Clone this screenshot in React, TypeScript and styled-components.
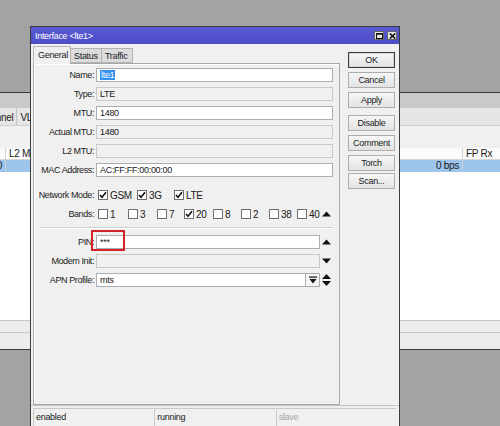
import styled, { createGlobalStyle } from "styled-components";

const GlobalStyle = createGlobalStyle`
  html, body {
    margin: 0;
    padding: 0;
    background: #a3a3a3;
  }
  body {
    font-family: "Liberation Sans Narrow", "Liberation Sans", Arial, sans-serif;
    font-size: 9px;
    letter-spacing: -0.3px;
    color: #1a1a1a;
    overflow: hidden;
  }
  * {
    box-sizing: border-box;
  }
`;

const Desktop = styled.div`
  position: relative;
  width: 500px;
  height: 426px;
  overflow: hidden;
  background: #a3a3a3;
`;

/* ---------- main window behind the dialog ---------- */

const MainWindow = styled.div`
  position: absolute;
  left: 0;
  top: 92px;
  width: 500px;
  height: 258px;
  display: flex;
  flex-direction: column;
  background: #f0f0f0;
  border-top: 1px solid #3a3a3a;
  border-bottom: 1px solid #3a3a3a;
`;

const MainToolbar = styled.div`
  height: 15px;
  background: #c9c9c9;
`;

const MainTabs = styled.div`
  height: 18px;
  display: flex;
  margin-left: -18px;
  background: #e6e6e6;
  border-bottom: 1px solid #cfcfcf;
`;

const MainTab = styled.div`
  padding: 4px 3px 0 3px;
  border-right: 1px solid #c4c4c4;
  line-height: 12px;
  font-size: 10px;
`;

const FilterArea = styled.div`
  height: 22px;
  background: #f0f0f0;
`;

const ListGrid = styled.div<{ $selected?: boolean; $header?: boolean }>`
  display: grid;
  grid-template-columns: 30px 80px 377px 1fr;
  margin-left: -25px;
  height: 12px;
  line-height: 12px;
  font-size: 10px;
  background: ${({ $selected, $header }) =>
    $selected ? "#9dc5ec" : $header ? "#fbfbfb" : "#fff"};
  border-bottom: 1px solid ${({ $header }) => ($header ? "#d6d6d6" : "transparent")};
`;

const ListCell = styled.div<{ $right?: boolean }>`
  padding: 0 3px;
  text-align: ${({ $right }) => ($right ? "right" : "left")};
  white-space: nowrap;
  overflow: hidden;
  border-left: 1px solid #d0d0d0;
`;

const ListBody = styled.div`
  flex: 1;
  background: #fff;
`;

const MainBar = styled.div<{ $h: number }>`
  height: ${({ $h }) => $h}px;
  background: #ececec;
  border-top: 1px solid #c6c6c6;
`;

/* ---------- interface dialog ---------- */

const Dialog = styled.div`
  position: absolute;
  left: 30px;
  top: 26px;
  width: 370px;
  height: 412px;
  background: #f0f0f0;
  border: 1px solid #3c3c3c;
  display: flex;
  flex-direction: column;
`;

const TitleBar = styled.div`
  height: 17px;
  display: flex;
  align-items: center;
  justify-content: space-between;
  padding: 0 2px 0 4px;
  background: linear-gradient(#5a5bd3, #4b4cc7);
  color: #fff;
`;

const TitleButtons = styled.div`
  display: flex;
  gap: 3px;
`;

const TitleButton = styled.div`
  width: 10px;
  height: 9px;
  display: flex;
  align-items: center;
  justify-content: center;
  background: #e4e4e4;
  border: 1px solid #666;
`;

const DialogBody = styled.div`
  flex: 0 0 361px;
  display: flex;
  padding: 1px 4px 0 2px;
  gap: 8px;
`;

const LeftColumn = styled.div`
  flex: 1;
  display: flex;
  flex-direction: column;
`;

const Tabs = styled.div`
  height: 18px;
  display: flex;
  align-items: flex-end;
`;

const Tab = styled.div<{ $active?: boolean }>`
  height: ${({ $active }) => ($active ? 18 : 15)}px;
  width: ${({ $active }) => ($active ? 38 : 31)}px;
  padding: ${({ $active }) => ($active ? "3px 0 0 4px" : "2px 0 0 3px")};
  background: ${({ $active }) => ($active ? "#f0f0f0" : "#dcdcdc")};
  border: 1px solid #b4b4b4;
  border-bottom: ${({ $active }) => ($active ? "none" : "1px solid #b4b4b4")};
  border-left: ${({ $active }) => ($active ? "1px solid #b4b4b4" : "none")};
  margin-bottom: ${({ $active }) => ($active ? "-1px" : "0")};
  position: relative;
  z-index: ${({ $active }) => ($active ? 1 : 0)};
`;

const Panel = styled.div`
  flex: 1;
  display: flex;
  flex-direction: column;
  padding: 4px 6px 0 1px;
  border: 1px solid #a9a9a9;
  box-shadow: inset 1px 1px 0 #fff;
`;

const Row = styled.div<{ $mt?: number }>`
  position: relative;
  display: flex;
  align-items: center;
  height: 14px;
  margin-top: ${({ $mt }) => $mt ?? 5}px;
`;

const Label = styled.div`
  width: 59px;
  margin-right: 2px;
  text-align: right;
  white-space: nowrap;
  letter-spacing: -0.4px;
  color: #222;
`;

const Field = styled.div<{ $readonly?: boolean }>`
  flex: 1;
  height: 14px;
  line-height: 12px;
  padding-left: 3px;
  background: ${({ $readonly }) => ($readonly ? "#f0f0f0" : "#fff")};
  border: 1px solid ${({ $readonly }) => ($readonly ? "#c8c8c8" : "#acadb3")};
  white-space: nowrap;
  overflow: hidden;
`;

const Selected = styled.span`
  background: #3392f0;
  color: #fff;
  padding: 0 1px;
`;

const DropButton = styled.div`
  width: 14px;
  height: 14px;
  display: flex;
  align-items: center;
  justify-content: center;
  border: 1px solid #acadb3;
  border-left: none;
  background: #f4f4f4;
`;

const ArrowSlot = styled.div`
  width: 13px;
  height: 14px;
  display: flex;
  align-items: center;
  justify-content: center;
`;

const Checks = styled.div`
  flex: 1;
  display: flex;
  align-items: center;
  padding-left: 2px;
`;

const CheckItem = styled.div<{ $w?: number }>`
  display: flex;
  align-items: center;
  gap: 2px;
  width: ${({ $w }) => ($w ? `${$w}px` : "auto")};
  font-size: 10px;
`;

const Box = styled.div`
  width: 10px;
  height: 10px;
  border: 1px solid #6f6f6f;
  background: #fff;
  display: flex;
  align-items: center;
  justify-content: center;
`;

const Separator = styled.div`
  height: 2px;
  margin: 6px 0 0 6px;
  border-top: 1px solid #cfcfcf;
  border-bottom: 1px solid #fff;
`;

const Highlight = styled.div`
  position: absolute;
  left: 56px;
  top: -5px;
  width: 34px;
  height: 21px;
  border: 2.5px solid #d3232b;
`;

const ButtonColumn = styled.div`
  width: 47px;
  display: flex;
  flex-direction: column;
  padding-top: 3px;
`;

const Button = styled.div<{ $default?: boolean; $mt?: number }>`
  height: 16px;
  margin-top: ${({ $mt }) => $mt ?? 4}px;
  display: flex;
  align-items: center;
  justify-content: center;
  background: linear-gradient(#f6f6f6, #e3e3e3);
  border: 1px solid ${({ $default }) => ($default ? "#3a3a3a" : "#adadad")};
  box-shadow: ${({ $default }) => ($default ? "inset 0 0 0 1px #d8d8d8" : "none")};
`;

const StatusBar = styled.div`
  height: 21px;
  display: flex;
  padding: 2px 3px 0 2px;
  gap: 1px;
  border-top: 1px solid #c2c2c2;
`;

const StatusCell = styled.div<{ $muted?: boolean }>`
  flex: 1;
  padding: 3px 0 0 2px;
  border-left: 1px solid #c8c8c8;
  border-top: 1px solid #c8c8c8;
  color: ${({ $muted }) => ($muted ? "#a6a6a6" : "#1a1a1a")};
`;

/* ---------- small drawings ---------- */

const Up = () => (
  <svg width="9" height="6" viewBox="0 0 9 6">
    <path d="M0 5.5 L4.5 0.5 L9 5.5 Z" fill="#111" />
  </svg>
);

const Down = () => (
  <svg width="9" height="6" viewBox="0 0 9 6">
    <path d="M0 0.5 L4.5 5.5 L9 0.5 Z" fill="#111" />
  </svg>
);

const UpDown = () => (
  <svg width="9" height="12" viewBox="0 0 9 12">
    <path d="M0 5 L4.5 0 L9 5 Z M0 7 L4.5 12 L9 7 Z" fill="#111" />
  </svg>
);

const DropIcon = () => (
  <svg width="8" height="8" viewBox="0 0 8 8">
    <rect x="0" y="0.5" width="8" height="1.2" fill="#111" />
    <path d="M0.5 3 L4 7.5 L7.5 3 Z" fill="#111" />
  </svg>
);

const Tick = () => (
  <svg width="8" height="8" viewBox="0 0 8 8">
    <path d="M1 4 L3 6.3 L7 1.3" stroke="#111" strokeWidth="1.6" fill="none" />
  </svg>
);

const MaxIcon = () => (
  <svg width="7" height="6" viewBox="0 0 7 6">
    <rect x="0.5" y="0.5" width="6" height="5" stroke="#111" fill="none" />
    <rect x="0.5" y="0.5" width="6" height="1.2" fill="#111" />
  </svg>
);

const CloseIcon = () => (
  <svg width="7" height="6" viewBox="0 0 7 6">
    <path d="M0.8 0.5 L6.2 5.5 M6.2 0.5 L0.8 5.5" stroke="#111" strokeWidth="1.6" />
  </svg>
);

const Check = ({ label, checked, w }: { label: string; checked?: boolean; w?: number }) => (
  <CheckItem $w={w}>
    <Box>{checked && <Tick />}</Box>
    {label}
  </CheckItem>
);

const bands: [string, boolean, number][] = [
  ["1", false, 30],
  ["3", false, 29],
  ["7", false, 27],
  ["20", true, 29],
  ["8", false, 28],
  ["2", false, 28],
  ["38", false, 28],
  ["40", false, 0],
];

export default function App() {
  return (
    <>
      <GlobalStyle />
      <Desktop>
        <MainWindow>
          <MainToolbar />
          <MainTabs>
            <MainTab>Tunnel</MainTab>
            <MainTab>VLAN</MainTab>
          </MainTabs>
          <FilterArea />
          <ListGrid $header>
            <ListCell>Tx</ListCell>
            <ListCell>L2 MTU</ListCell>
            <ListCell>Tx</ListCell>
            <ListCell>FP Rx</ListCell>
          </ListGrid>
          <ListGrid $selected>
            <ListCell $right>0</ListCell>
            <ListCell $right>1500</ListCell>
            <ListCell $right>0 bps</ListCell>
            <ListCell $right></ListCell>
          </ListGrid>
          <ListBody />
          <MainBar $h={12} />
          <MainBar $h={17} />
        </MainWindow>

        <Dialog>
          <TitleBar>
            <span>Interface &lt;lte1&gt;</span>
            <TitleButtons>
              <TitleButton>
                <MaxIcon />
              </TitleButton>
              <TitleButton>
                <CloseIcon />
              </TitleButton>
            </TitleButtons>
          </TitleBar>

          <DialogBody>
            <LeftColumn>
              <Tabs>
                <Tab $active>General</Tab>
                <Tab>Status</Tab>
                <Tab>Traffic</Tab>
              </Tabs>
              <Panel>
                <Row $mt={0}>
                  <Label>Name:</Label>
                  <Field>
                    <Selected>lte1</Selected>
                  </Field>
                </Row>
                <Row>
                  <Label>Type:</Label>
                  <Field $readonly>LTE</Field>
                </Row>
                <Row>
                  <Label>MTU:</Label>
                  <Field>1480</Field>
                </Row>
                <Row>
                  <Label>Actual MTU:</Label>
                  <Field $readonly>1480</Field>
                </Row>
                <Row>
                  <Label>L2 MTU:</Label>
                  <Field $readonly />
                </Row>
                <Row>
                  <Label>MAC Address:</Label>
                  <Field>AC:FF:FF:00:00:00</Field>
                </Row>

                <Row $mt={11}>
                  <Label>Network Mode:</Label>
                  <Checks>
                    <Check label="GSM" checked w={39} />
                    <Check label="3G" checked w={37} />
                    <Check label="LTE" checked />
                  </Checks>
                </Row>
                <Row>
                  <Label>Bands:</Label>
                  <Checks>
                    {bands.map(([b, on, w]) => (
                      <Check key={b} label={b} checked={on} w={w || undefined} />
                    ))}
                  </Checks>
                  <ArrowSlot>
                    <Up />
                  </ArrowSlot>
                </Row>

                <Separator />

                <Row $mt={6}>
                  <Label>PIN:</Label>
                  <Field>***</Field>
                  <ArrowSlot>
                    <Up />
                  </ArrowSlot>
                  <Highlight />
                </Row>
                <Row>
                  <Label>Modem Init:</Label>
                  <Field $readonly />
                  <ArrowSlot>
                    <Down />
                  </ArrowSlot>
                </Row>
                <Row>
                  <Label>APN Profile:</Label>
                  <Field>mts</Field>
                  <DropButton>
                    <DropIcon />
                  </DropButton>
                  <ArrowSlot>
                    <UpDown />
                  </ArrowSlot>
                </Row>
              </Panel>
            </LeftColumn>

            <ButtonColumn>
              <Button $default>OK</Button>
              <Button>Cancel</Button>
              <Button>Apply</Button>
              <Button $mt={7}>Disable</Button>
              <Button>Comment</Button>
              <Button>Torch</Button>
              <Button $mt={2}>Scan...</Button>
            </ButtonColumn>
          </DialogBody>

          <StatusBar>
            <StatusCell>enabled</StatusCell>
            <StatusCell>running</StatusCell>
            <StatusCell $muted>slave</StatusCell>
          </StatusBar>
        </Dialog>
      </Desktop>
    </>
  );
}
